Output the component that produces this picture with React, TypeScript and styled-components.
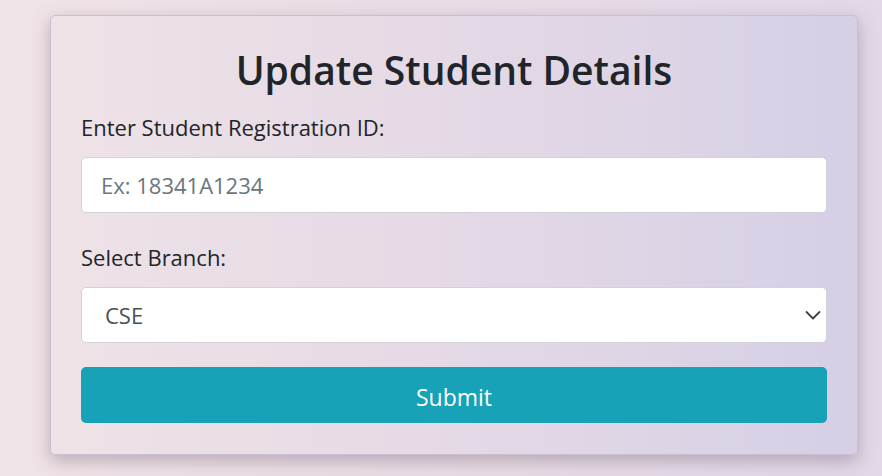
import React from "react";
import styled, { createGlobalStyle } from "styled-components";

const Global = createGlobalStyle`
  html, body { margin: 0; padding: 0; }
  body {
    width: 882px;
    height: 476px;
    overflow: hidden;
    background: linear-gradient(90deg, #f1e4e8 0%, #e9dde6 50%, #e2d8e8 100%);
    font-family: "Open Sans", "Noto Sans", sans-serif;
    color: #212529;
  }
`;

const Page = styled.div`
  padding: 15px 24px 0 50px;
`;

const Card = styled.form`
  box-sizing: border-box;
  width: 808px;
  height: 440px;
  border: 1px solid #c9bfd3;
  border-radius: 5px;
  background: linear-gradient(90deg, #efe3e8 0%, #e4d9e5 50%, #d6cfe5 100%);
  box-shadow: 0 6px 18px rgba(90, 70, 90, 0.35);
  padding: 30px 30px 31px 30px;
  display: flex;
  flex-direction: column;
`;

const Title = styled.h1`
  margin: 0 0 17px;
  text-align: center;
  font-size: 39px;
  font-weight: 600;
  line-height: 48px;
  color: #212529;
`;

const Field = styled.div<{ $gap?: number }>`
  display: flex;
  flex-direction: column;
  margin-top: ${(p) => p.$gap ?? 0}px;
`;

const Label = styled.label`
  font-size: 22px;
  line-height: 33px;
  color: #212529;
  margin-bottom: 13px;
`;

const TextInput = styled.input`
  box-sizing: border-box;
  width: 100%;
  height: 56px;
  padding: 0 19px;
  border: 1px solid #ced4da;
  border-radius: 5px;
  background: #fff;
  font-family: inherit;
  font-size: 22px;
  color: #495057;
  outline: none;
  &::placeholder { color: #6c757d; }
`;

const SelectWrap = styled.div`
  position: relative;
`;

const Select = styled.select`
  box-sizing: border-box;
  width: 100%;
  height: 56px;
  padding: 0 40px 0 23px;
  border: 1px solid #ced4da;
  border-radius: 5px;
  background: #fff;
  appearance: none;
  font-family: inherit;
  font-size: 22px;
  color: #495057;
  outline: none;
`;

const Chevron = styled.svg`
  position: absolute;
  right: 6px;
  top: 50%;
  transform: translateY(-50%);
  pointer-events: none;
`;

const Button = styled.button`
  box-sizing: border-box;
  width: 100%;
  height: 56px;
  margin-top: 24px;
  padding: 4px 0 0;
  border: none;
  border-radius: 5px;
  background: #17a2b8;
  color: #fff;
  font-family: inherit;
  font-size: 23px;
  cursor: pointer;
`;

export default function App() {
  return (
    <>
      <Global />
      <Page>
        <Card onSubmit={(e) => e.preventDefault()}>
          <Title>Update Student Details</Title>
          <Field>
            <Label htmlFor="rid">Enter Student Registration ID:</Label>
            <TextInput id="rid" placeholder="Ex: 18341A1234" />
          </Field>
          <Field $gap={28}>
            <Label htmlFor="br">Select Branch:</Label>
            <SelectWrap>
              <Select id="br" defaultValue="CSE">
                <option>CSE</option>
                <option>ECE</option>
                <option>EEE</option>
                <option>MECH</option>
                <option>CIVIL</option>
              </Select>
              <Chevron width="16" height="16" viewBox="0 0 16 16">
                <path d="M1.5 5l6.5 6.5 6.5-6.5" fill="none" stroke="#3d4349" strokeWidth="1.8" strokeLinecap="round" strokeLinejoin="round" />
              </Chevron>
            </SelectWrap>
          </Field>
          <Button type="submit">Submit</Button>
        </Card>
      </Page>
    </>
  );
}
